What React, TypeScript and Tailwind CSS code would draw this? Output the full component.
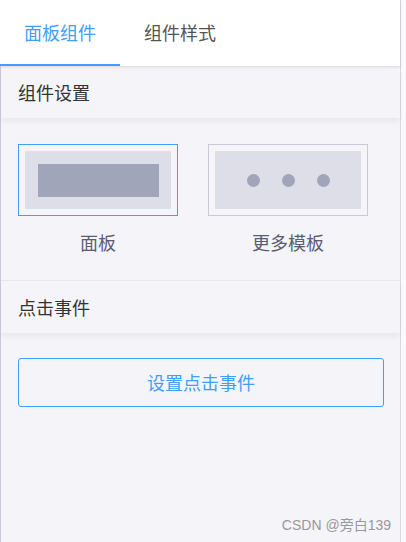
import React from "react";

const font = { fontFamily: '"Noto Sans CJK SC", "Noto Sans", sans-serif' };
const wm = { fontFamily: '"Liberation Sans", "Noto Sans CJK SC", sans-serif' };

export default function App() {
  return (
    <div className="w-[406px] h-[542px] bg-[#fafafc] flex relative overflow-hidden" style={font}>
      <div className="w-[401px] h-full flex flex-col border-r border-[#d9d9e2] bg-[#f4f4f9]">
        <div className="h-[66px] bg-white flex items-stretch shadow-[0_1px_3px_rgba(0,0,0,0.12)] relative z-10">
          <div className="w-[120px] flex items-center justify-center text-[18px] text-[#409eff] border-b-2 border-[#409eff]">
            面板组件
          </div>
          <div className="w-[120px] flex items-center justify-center text-[18px] text-[#555] border-b-2 border-transparent">
            组件样式
          </div>
        </div>
        <div className="flex-1 flex flex-col border-l border-[#c9c9da]">
          <div className="h-[52px] flex items-center px-[17px] text-[18px] text-[#333] shadow-[0_4px_6px_rgba(0,0,0,0.05)] relative">
            组件设置
          </div>
          <div className="flex gap-[30px] px-[17px] pt-[26px] pb-[26px] border-b border-[#e6e6ee]">
            <div className="flex flex-col items-center">
              <div className="w-[160px] h-[72px] border border-[#409eff] p-[6px]">
                <div className="w-full h-full bg-[#dedee8] flex items-center justify-center">
                  <div className="w-[121px] h-[33px] bg-[#a0a5ba]" />
                </div>
              </div>
              <div className="mt-[14px] text-[18px] leading-[24px] text-[#5a5d6e]">面板</div>
            </div>
            <div className="flex flex-col items-center">
              <div className="w-[160px] h-[72px] border border-[#c9c9da] p-[6px]">
                <div className="w-full h-full bg-[#dedee8] flex items-center justify-center gap-[22px]">
                  <div className="w-[13px] h-[13px] rounded-full bg-[#a0a5ba]" />
                  <div className="w-[13px] h-[13px] rounded-full bg-[#a0a5ba]" />
                  <div className="w-[13px] h-[13px] rounded-full bg-[#a0a5ba]" />
                </div>
              </div>
              <div className="mt-[14px] text-[18px] leading-[24px] text-[#5a5d6e]">更多模板</div>
            </div>
          </div>
          <div className="h-[52px] flex items-center px-[17px] text-[18px] text-[#333] shadow-[0_4px_6px_rgba(0,0,0,0.05)] relative">
            点击事件
          </div>
          <div className="px-[17px] pt-[25px]">
            <div className="w-[366px] h-[49px] border border-[#409eff] rounded-[3px] flex items-center justify-center text-[18px] text-[#409eff]">
              设置点击事件
            </div>
          </div>
        </div>
      </div>
      <div className="absolute right-[15px] bottom-[6px] text-[14px] text-[#999]" style={wm}>
        CSDN @旁白139
      </div>
    </div>
  );
}
